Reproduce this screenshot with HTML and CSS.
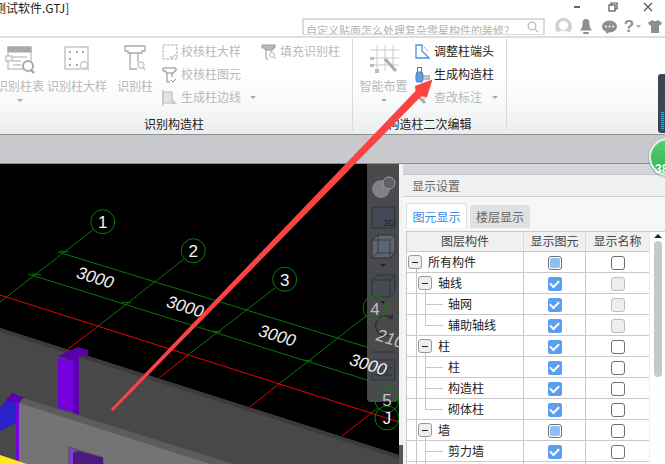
FILE: index.html
```html
<!DOCTYPE html>
<html lang="zh-CN">
<head>
<meta charset="utf-8">
<title>GTJ</title>
<link rel="stylesheet" href="styles.css">
</head>
<body>
<div class="app">
  <header class="titlebar">
    <div class="title-row">
      <div class="title">测试软件.GTJ]</div>
      <div class="win-btn"><svg width="8" height="3" viewBox="0 0 8 3"><rect y="0" width="6" height="2" fill="#666"/></svg></div>
      <div class="win-btn"><svg width="10" height="10" viewBox="0 0 10 10" fill="none" stroke="#555" stroke-width="1.2"><rect x="1" y="3" width="6" height="6"/><path d="M3 3V1h6v6H7"/></svg></div>
      <div class="win-btn"><svg width="10" height="10" viewBox="0 0 10 10" fill="none" stroke="#555" stroke-width="1.2"><path d="M1 1l8 8M9 1L1 9"/></svg></div>
    </div>
    <div class="tool-row">
      <div class="search"><span class="search-text">自定义贴面怎么处理复杂零星构件的装修?</span>
        <svg class="search-icon" width="12" height="12" viewBox="0 0 12 12" fill="none" stroke="#bbb" stroke-width="1.3"><circle cx="5" cy="5" r="3.8"/><path d="M8 8l3 3"/></svg>
      </div>
      <svg class="ti ti-avatar" width="17" height="17" viewBox="0 0 17 17"><circle cx="8.5" cy="8.5" r="8.5" fill="#d2d2d2"/><circle cx="8.5" cy="7.5" r="4.6" fill="#fff"/><path d="M2.5 15c1.500-3 10.500-3 12 0l-3 2h-6z" fill="#fff"/></svg>
      <svg class="ti ti-bell" width="12" height="16" viewBox="0 0 12 16"><path d="M6 0c3 0 3.500 2.500 3.500 5 0 3 1 4.500 2.500 6.500H0C1.500 9.500 2.500 8 2.500 5 2.500 2.500 3 0 6 0z" fill="#8e8e8e"/><rect x="3" y="13" width="6" height="2" rx="1" fill="#8e8e8e"/></svg>
      <svg class="ti ti-chat" width="15" height="14" viewBox="0 0 15 14"><ellipse cx="7.500" cy="6.500" rx="7.500" ry="6" fill="#8e8e8e"/><path d="M4 11l0 3 4-2.500z" fill="#8e8e8e"/><g fill="#fff"><circle cx="4" cy="6.500" r="1"/><circle cx="7.500" cy="6.500" r="1"/><circle cx="11" cy="6.500" r="1"/></g></svg>
      <span class="ti ti-help">?</span>
      <svg class="ti ti-caret" width="5" height="3" viewBox="0 0 5 3"><path d="M0 0h5L2.500 3z" fill="#aaa"/></svg>
      <svg class="ti ti-shirt" width="14" height="13" viewBox="0 0 14 13"><path d="M4.500 0L0 2.500 1.500 5.500 3 5v8h8V5l1.500.5L14 2.500 9.500 0C9 1.500 5 1.500 4.500 0z" fill="#8e8e8e"/></svg>
    </div>
  </header>

  <section class="ribbon">
    <div class="group group-one">
      <div class="tools">
        <div class="large w48">
          <svg width="30" height="30" viewBox="0 0 30 30" fill="none" stroke="#aaa"><rect x="3" y="2" width="23" height="22" fill="#fff"/><rect x="3" y="2" width="23" height="5" fill="#aaa"/><path d="M8 12h14M8 16h8M8 20h8"/><rect x="1" y="11" width="6" height="5" fill="#fff"/><circle cx="23" cy="21" r="5" stroke-width="2" fill="#fff"/><path d="M26 25l3 3" stroke-width="2.500"/></svg>
          <span class="label off">识别柱表</span>
          <i class="caret"></i>
        </div>
        <div class="large w66">
          <svg width="30" height="30" viewBox="0 0 30 30" fill="none" stroke="#aaa"><rect x="3" y="2" width="23" height="22"/><g fill="#aaa" stroke="none"><rect x="7" y="6" width="2" height="2"/><rect x="14" y="6" width="2" height="2"/><rect x="20" y="6" width="2" height="2"/><rect x="7" y="13" width="2" height="2"/><rect x="7" y="19" width="2" height="2"/><rect x="14" y="19" width="2" height="2"/></g><circle cx="22" cy="20" r="3.500" fill="#fff" stroke="#ccc" stroke-width="1.500"/><path d="M24.500 23l2.500 2.500" stroke="#ccc" stroke-width="1.500"/></svg>
          <span class="label off">识别柱大样</span>
        </div>
        <div class="large w50">
          <svg width="30" height="30" viewBox="0 0 30 30" fill="none" stroke="#aaa"><path d="M5 1h20v5h-3v2H8V6H5zM10 8v16h7M18 8v9" stroke-width="1.300"/><circle cx="21" cy="20" r="3" stroke="#ccc" stroke-width="1.500"/><path d="M23 22.500l2.500 2.500" stroke="#ccc" stroke-width="1.500"/></svg>
          <span class="label off">识别柱</span>
        </div>
        <div class="smalls col-a">
          <div class="small off"><svg width="16" height="16" viewBox="0 0 16 16" fill="none" stroke="#aaa"><rect x="1" y="1" width="14" height="14" stroke-dasharray="3 1"/><path d="M8 12l2 2 4-4"/></svg>校核柱大样</div>
          <div class="small off"><svg width="16" height="16" viewBox="0 0 16 16" fill="none" stroke="#888"><path d="M1 1h13v3h-2v2H4V4H1zM5 6v9h3M10 6v4M9 13l2 2 3-3"/></svg>校核柱图元</div>
          <div class="small off"><svg width="16" height="16" viewBox="0 0 16 16"><path d="M1 0v16" stroke="#aaa"/><rect x="1" y="2" width="9" height="11" fill="#e2e2e2" stroke="#bbb"/><path d="M10 8l5 6h-5z" fill="#ccc"/></svg>生成柱边线<i class="caret inline"></i></div>
        </div>
        <div class="smalls col-b">
          <div class="small off"><svg width="16" height="16" viewBox="0 0 16 16" fill="none" stroke="#999"><path d="M1 1h13v3h-2v2H4V4H1z" fill="#bbb"/><path d="M5 6v9h2M10 6v2"/><circle cx="11" cy="11" r="2.500" stroke="#bbb"/><path d="M13 13l2 2" stroke="#bbb"/></svg>填充识别柱</div>
        </div>
      </div>
      <div class="group-label">识别构造柱</div>
    </div>
    <div class="group group-two">
      <div class="tools">
        <div class="large w61">
          <svg width="30" height="30" viewBox="0 0 30 30" fill="none" stroke="#ccc"><path d="M8 0v26M16 0v26M24 0v26M1 5h29M1 13h29M1 20h29"/><path d="M16 14l11 12" stroke="#aaa" stroke-width="3"/><g fill="#bbb" stroke="none"><rect x="1" y="12" width="4" height="3"/><rect x="1" y="19" width="4" height="3"/><rect x="6" y="24" width="4" height="4"/></g></svg>
          <span class="label off">智能布置</span>
          <i class="caret"></i>
        </div>
        <div class="smalls col-c">
          <div class="small"><svg width="16" height="16" viewBox="0 0 16 16" fill="none"><path d="M2 1v13h13L8 7V1z" stroke="#4f93dc" stroke-width="1.300"/><path d="M8 1l6 6" stroke="#e8913c" stroke-dasharray="2 1"/></svg>调整柱端头</div>
          <div class="small"><svg width="16" height="16" viewBox="0 0 16 16"><rect x="3.500" y="0.500" width="4" height="5" fill="#fff" stroke="#777"/><path d="M3 5h5l1 3v5l-1 2H3l-1-2V8z" fill="#5b9ee6" stroke="#3f7fc4"/><rect x="9" y="9" width="7" height="3" fill="#ddd" stroke="#888"/></svg>生成构造柱</div>
          <div class="small off"><svg width="16" height="16" viewBox="0 0 16 16" fill="none" stroke="#aaa"><path d="M3 5l8 8" stroke-width="3"/><circle cx="9" cy="6" r="3"/></svg>查改标注<i class="caret inline"></i></div>
        </div>
      </div>
      <div class="group-label">构造柱二次编辑</div>
    </div>
  </section>

  <div class="band"></div>

  <main class="work">
    <svg class="scene" viewBox="0 164 403 300" width="403" height="300">
      <rect x="0" y="164" width="403" height="300" fill="#000"/>
      <!-- grid lines -->
      <g stroke="#0b760b" fill="none">
        <path d="M94 229L0 302M184 259L97 327M275 288L188 355M366 316L279 384M378 408L370 414"/>
        <path d="M58 252L399 357M28 274L399 390"/>
        <path d="M60 251l9 1M32 274l9 1M122 302l9 1M212 331l9 1M303 360l9 1"/>
      </g>
      <g stroke="#f00000" fill="none">
        <path d="M0 295L399 422"/>
        <path d="M97 327L68 349M188 355L159 378M279 384L250 407M370 414L342 436"/>
      </g>
      <!-- walls -->
      <polygon points="0,328 399,455 399,464 0,464" fill="#484848"/>
      <polygon points="0,328 399,455 399,459 0,332" fill="#3b3b3b"/>
      <polygon points="73,362 79,360 79,415 73,412" fill="#5a00ac"/>
      <polygon points="58,358 73,362 73,412 58,408" fill="#7600e0"/>
      <polygon points="58,356 78,347 88,350 88,355 79,357 79,360 73,362" fill="#5a00ac"/>
      <polygon points="6,400 16,402 16,423 0,431 0,408" fill="#2a22c8"/>
      <rect x="16" y="402" width="3" height="62" fill="#7600e0"/>
      <polygon points="6,400 12,393 25,398 19,403" fill="#5a00ac"/>
      <polygon points="19,403 23,398 240,466 19,466" fill="#5c5c5c"/>
      <polygon points="19,403 210,464 19,464" fill="#747474"/>
      <polygon points="68,446 103,457 104,464 68,464" fill="#5c5c5c"/>
      <polygon points="70,448 78,451 73,453 73,464 70,464" fill="#7c3bdc"/>
      <polygon points="73,453 78,451 103,457.500 103,464 73,464" fill="#4a1a80"/>
      <polygon points="0,455 27,464 0,464" fill="#ffe81e"/>
      <!-- view toolbar -->
      <path d="M367 164h32v234a4 4 0 0 1-4 4h-24a4 4 0 0 1-4-4z" fill="#4a4a4c"/>
      <ellipse cx="381" cy="189" rx="9" ry="9" fill="#7f8288"/>
      <ellipse cx="389" cy="183" rx="6" ry="6" fill="#5d6068" stroke="#9a9da3"/>
      <rect x="372" y="207" width="23" height="21" fill="#424854" stroke="#2e3036"/>
      <text x="389" y="226" class="t2d">2D</text>
      <path d="M372 240l6-5h17v18l-5 5h-18z" fill="#5c6670" stroke="#2e3036"/>
      <path d="M372 240h18v18M390 240l5-5M378 235v18h17M378 253l-6 5" fill="none" stroke="#2e3036" stroke-width=".8"/>
      <path d="M380 264h6l-3 3z" fill="#222"/>
      <path d="M372 280l6-5h17v17l-5 5h-18z" fill="#454a54" stroke="#2e3036"/>
      <path d="M372 280h18v17M390 280l5-5" fill="none" stroke="#2e3036"/>
      <path d="M380 301h6l-3 3z" fill="#222"/>
      <path d="M393 319a10 10 0 1 0-2 15" fill="none" stroke="#2e3036" stroke-width="1.500"/>
      <path d="M387 319h6v-5z" fill="#2e3036"/>
      <path d="M372 352h21" stroke="#2e3036"/>
      <rect x="372" y="360" width="23" height="20" fill="#424854" stroke="#2e3036"/>
      <path d="M375 375h17M375 368h17M380 363v15M387 363v15" stroke="#23252a" stroke-dasharray="2 1"/>
      <!-- bubbles -->
      <g fill="none" stroke="#0c7c0c">
        <circle cx="102.700" cy="221.700" r="12"/>
        <circle cx="193.300" cy="250.700" r="12"/>
        <circle cx="284.700" cy="279.300" r="12"/>
        <circle cx="375" cy="308" r="12"/>
        <circle cx="387" cy="400" r="12"/>
        <circle cx="387" cy="418" r="12"/>
      </g>
      <g class="bubble-num">
        <text x="102.700" y="228">1</text>
        <text x="193.300" y="257">2</text>
        <text x="284.700" y="285.500">3</text>
        <text x="375" y="314.500" class="dim">4</text>
        <text x="387" y="406" class="dim">5</text>
        <text x="387" y="424">J</text>
      </g>
      <g class="dim-num">
        <text transform="translate(93 283) rotate(17.500) skewX(-8)">3000</text>
        <text transform="translate(183 312) rotate(17.500) skewX(-8)">3000</text>
        <text transform="translate(275 341) rotate(17.500) skewX(-8)">3000</text>
        <text transform="translate(366 370) rotate(17.500) skewX(-8)">3000</text>
        <text transform="translate(388 344) rotate(17.500) skewX(-8)" class="dim">210</text>
      </g>
      <!-- strip beside panel -->
      <rect x="399" y="164" width="4" height="281" fill="#f2f2f3"/>
      <rect x="399" y="445" width="4" height="19" fill="#55575a"/>
    </svg>

    <aside class="panel">
      <div class="panel-top"></div>
      <div class="panel-title">显示设置</div>
      <div class="tabs">
        <div class="tab active">图元显示</div>
        <div class="tab">楼层显示</div>
      </div>
      <div class="grid-wrap">
        <table class="grid">
          <colgroup><col class="c1"><col class="c2"><col class="c3"></colgroup>
          <thead><tr><th>图层构件</th><th>显示图元</th><th>显示名称</th></tr></thead>
          <tbody>
            <tr><td><div class="tree lvl0"><b class="exp"></b>所有构件</div></td><td><span class="cb mixed"></span></td><td><span class="cb"></span></td></tr>
            <tr><td><div class="tree lvl1"><b class="exp"></b>轴线</div></td><td><span class="cb on"></span></td><td><span class="cb dis"></span></td></tr>
            <tr><td><div class="tree lvl2">轴网</div></td><td><span class="cb on"></span></td><td><span class="cb dis"></span></td></tr>
            <tr><td><div class="tree lvl2 end">辅助轴线</div></td><td><span class="cb on"></span></td><td><span class="cb dis"></span></td></tr>
            <tr><td><div class="tree lvl1"><b class="exp"></b>柱</div></td><td><span class="cb on"></span></td><td><span class="cb"></span></td></tr>
            <tr><td><div class="tree lvl2">柱</div></td><td><span class="cb on"></span></td><td><span class="cb"></span></td></tr>
            <tr><td><div class="tree lvl2">构造柱</div></td><td><span class="cb on"></span></td><td><span class="cb"></span></td></tr>
            <tr><td><div class="tree lvl2 end">砌体柱</div></td><td><span class="cb on"></span></td><td><span class="cb"></span></td></tr>
            <tr><td><div class="tree lvl1"><b class="exp"></b>墙</div></td><td><span class="cb mixed"></span></td><td><span class="cb"></span></td></tr>
            <tr><td><div class="tree lvl2">剪力墙</div></td><td><span class="cb on"></span></td><td><span class="cb"></span></td></tr>
            <tr><td><div class="tree lvl2"></div></td><td></td><td></td></tr>
          </tbody>
        </table>
        <div class="vscroll"><i class="up"></i><i class="thumb"></i></div>
      </div>
    </aside>
  </main>

  <svg class="arrow" width="665" height="464" viewBox="0 0 665 464"><polygon points="432.500,79.500 427,97 421,96.500 113,411 111,409 415.500,91 415,86" fill="#fa4444"/></svg>
  <div class="meter"><i></i></div>
  <div class="badge">38%</div>
</div>
</body>
</html>
```
FILE: styles.css
```css
* { box-sizing: border-box; }
html, body { margin: 0; padding: 0; }
body { width: 665px; height: 464px; overflow: hidden; background: #fff; font: 12px/1.2 "Noto Sans CJK SC", "Liberation Sans", sans-serif; color: #222; }
.app { position: relative; width: 665px; height: 464px; overflow: hidden; display: flex; flex-direction: column; }

.titlebar { height: 36px; flex: none; background: #fff; }
.title-row { display: flex; height: 14px; margin-bottom: 4px; align-items: center; }
.title { flex: 1; margin-left: -6px; padding-top: 1px; font-size: 12px; line-height: 14px; color: #222; white-space: nowrap; }
.win-btn { width: 35px; height: 14px; display: flex; align-items: center; justify-content: center; }
.tool-row { display: flex; align-items: center; height: 17px; padding-left: 302px; }
.search { width: 243px; height: 17px; flex: none; border: 2px solid #dcdcdc; border-bottom-width: 1px; background: #fff; display: flex; overflow: hidden; align-items: flex-start; }
.search-text { flex: 1; padding-left: 2px; font-size: 11px; line-height: 20px; color: #b2b2b2; white-space: nowrap; }
.search-icon { flex: none; margin: 1px 4px 0 0; }
.ti { flex: none; }
.ti-avatar { margin-left: 10px; }
.ti-bell { margin-left: 8px; }
.ti-chat { margin-left: 10px; }
.ti-help { margin-left: 6px; width: 12px; font: 700 17px/17px "Liberation Sans", sans-serif; color: #8e8e8e; text-align: center; }
.ti-caret { margin-left: 1px; }
.ti-shirt { margin-left: 7px; }

.ribbon { height: 99px; flex: none; display: flex; padding: 1px 0 4px; border-top: 2px solid #dedede; border-bottom: 1px solid #8d8f93; background: linear-gradient(#fff 35%, #f9fafa 65%, #eceded); }
.group { display: flex; flex-direction: column; flex: none; border-right: 1px solid #d9dadb; }
.group-one { width: 364px; margin-left: -11px; padding-left: 7px; }
.group-two { width: 154px; }
.tools { display: flex; height: 72px; }
.group-label { height: 20px; padding-top: 5px; line-height: 17px; text-align: center; color: #222; }
.large { display: flex; flex-direction: column; align-items: center; flex: none; padding-top: 6px; white-space: nowrap; }
.large svg { flex: none; margin-bottom: 3px; }
.w48 { width: 48px; } .w66 { width: 66px; } .w50 { width: 50px; } .w61 { width: 61px; }
.label { line-height: 16px; }
.off { color: #b9b9b9; }
.caret { display: block; width: 0; height: 0; margin-top: 5px; border: 3px solid transparent; border-top: 3px solid #aaa; border-bottom: 0; }
.caret.inline { margin: 0 0 0 6px; }
.smalls { display: flex; flex-direction: column; flex: none; padding-top: 1px; }
.col-a { width: 99px; margin-left: 2px; }
.col-c .small { gap: 4px; }
.small { height: 23px; display: flex; align-items: center; gap: 3px; white-space: nowrap; }
.small svg { flex: none; }

.band { height: 29px; flex: none; background: #c8c9cd; border-bottom: 1px solid #8b8c90; }
.work { flex: 1; display: flex; min-height: 0; }
.scene { display: block; flex: none; }
.scene text { font-family: "Liberation Sans", sans-serif; }
.t2d { font-size: 9px; fill: #22242a; text-anchor: middle; }
.bubble-num text { font-size: 17px; fill: #f4f4f4; text-anchor: middle; }
.dim-num text { font-size: 17px; fill: #eee; text-anchor: middle; }
.scene text.dim { fill: #c0c0c0; }

.panel { flex: 1; min-width: 0; display: flex; flex-direction: column; background: #f4f4f5; overflow: hidden; }
.panel-top { height: 11px; flex: none; background: #d4d5d9; border-bottom: 1px solid #c6c7ca; }
.panel-title { height: 22px; flex: none; padding-left: 9px; line-height: 22px; color: #666; background: #f0f0f0; border-bottom: 1px solid #cdcdcd; }
.tabs { display: flex; align-items: flex-end; height: 34px; flex: none; padding: 0 0 3px 3px; gap: 3px; background: #f7f7f7; }
.tab { width: 60px; height: 23px; background: #e0e0e0; color: #666; text-align: center; line-height: 23px; border-radius: 3px 3px 0 0; }
.tab.active { width: 61px; height: 25px; background: #fff; color: #3b8ae6; line-height: 25px; border: 1px solid #dcdcdc; border-bottom: 0; }
.grid-wrap { flex: 1; display: flex; margin-left: 3px; background: #fff; border-top: 1px solid #c9c9c9; border-left: 1px solid #c9c9c9; min-height: 0; overflow: hidden; }
.grid { width: 242px; flex: none; table-layout: fixed; border-collapse: separate; border-spacing: 0; align-self: flex-start; }
.c1 { width: 117px; } .c2 { width: 62px; } .c3 { width: 63px; }
.grid th { height: 20px; padding: 0; font-weight: 400; color: #444; background: #f0f0f0; border-right: 1px solid #dadada; border-bottom: 1px solid #c9c9c9; }
.grid td { height: 21px; padding: 0; text-align: center; border-right: 1px solid #c9c9c9; border-bottom: 1px solid #c9c9c9; }
.grid tr td:last-child, .grid tr th:last-child { border-right: 0; }
.tree { --l: #c6c6c6; display: flex; align-items: center; gap: 6px; height: 20px; text-align: left; white-space: nowrap; background-repeat: no-repeat; }
.exp { display: flex; align-items: center; justify-content: center; width: 14px; height: 14px; flex: none; border: 1px solid #9a9a9a; border-radius: 3px; background: #eee; }
.exp::before { content: ""; width: 6px; height: 1px; background: #222; }
.lvl0 { padding-left: 1px; background-image: linear-gradient(var(--l), var(--l)); background-position: 9px 100%; background-size: 1px 50%; }
.lvl1 { padding-left: 11px; background-image: linear-gradient(var(--l), var(--l)), linear-gradient(var(--l), var(--l)); background-position: 9px 0, 18px 100%; background-size: 1px 100%, 1px 50%; }
.lvl2 { padding-left: 41px; background-image: linear-gradient(var(--l), var(--l)), linear-gradient(var(--l), var(--l)), linear-gradient(var(--l), var(--l)); background-position: 9px 0, 18px 0, 18px 50%; background-size: 1px 100%, 1px 100%, 18px 1px; }
.lvl2.end { background-size: 1px 100%, 1px 50%, 18px 1px; }
.cb { display: inline-flex; align-items: center; justify-content: center; width: 14px; height: 14px; vertical-align: middle; background: #fff; border: 1px solid #707070; border-radius: 3px; }
.cb.dis { background: #eee; border-color: #bdbdbd; }
.cb.on { background: #5a9ff2; border-color: #5a9ff2; border-radius: 2px; }
.cb.on::before { content: ""; width: 7px; height: 4px; margin-top: -2px; border-left: 2px solid #fff; border-bottom: 2px solid #fff; transform: rotate(-45deg); }
.cb.mixed::before { content: ""; width: 10px; height: 10px; border-radius: 2px; background: #8fbdf8; }
.vscroll { flex: 1; display: flex; flex-direction: column; align-items: center; padding-top: 2px; background: #fff; border-left: 1px solid #eee; }
.up { width: 0; height: 0; border: 4px solid transparent; border-bottom: 4px solid #222; border-top: 0; }
.thumb { width: 8px; height: 136px; margin-top: 3px; border-radius: 4px; background: #c8c8c8; }

.arrow { position: absolute; left: 0; top: 0; pointer-events: none; }
.meter { position: absolute; left: 658px; top: 74px; width: 10px; height: 59px; padding: 38px 0 3px 3px; border-radius: 3px; background: #3b4653; }
.meter i { display: block; width: 3px; height: 18px; background: repeating-linear-gradient(#29a8f0 0 1px, #1d5f8a 1px 2px); }
.badge { position: absolute; left: 649px; top: 138px; width: 38px; height: 38px; padding: 23px 0 0 4px; border-radius: 50%; border: 2px solid #e8eee9; background: linear-gradient(#57cf6e, #2fb54c); box-shadow: 0 1px 2px rgba(0,0,0,.4); color: #fff; font: 700 12px/12px "Liberation Sans", sans-serif; white-space: nowrap; }
```
